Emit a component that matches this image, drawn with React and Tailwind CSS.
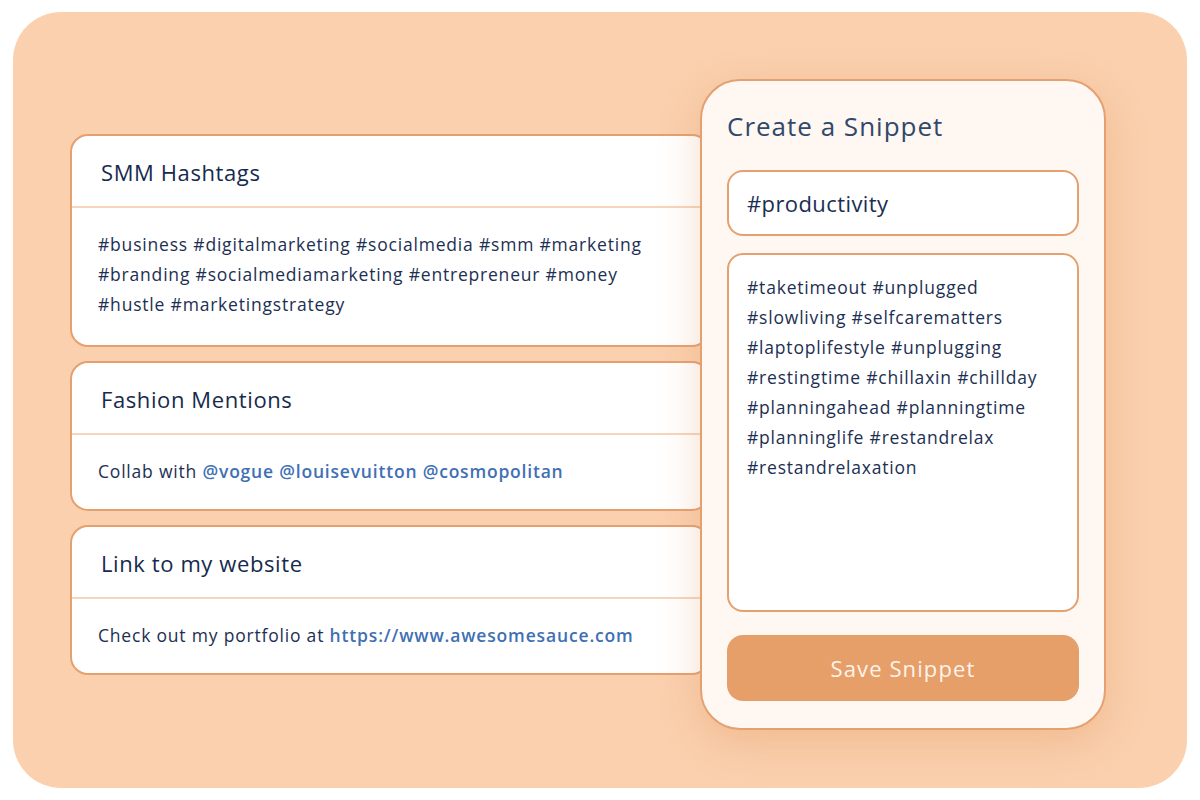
import React from "react";

function Card({ title, className, children }) {
  return (
    <div className={"flex flex-col rounded-[18px] border-2 border-[#e5a070] bg-white overflow-hidden " + className}>
      <div className="h-[72px] shrink-0 flex items-center pl-[29px] pt-[3px] border-b-2 border-[#f6d5bc] text-[22px] text-[#162a4d] tracking-[0.6px]">
        {title}
      </div>
      <div className="pl-[26px] pt-[21px] text-[17.5px] leading-[30px] tracking-[0.8px] text-[#1d2f52] whitespace-nowrap">
        {children}
      </div>
    </div>
  );
}

export default function App() {
  return (
    <div className="w-[1200px] h-[800px] bg-white pt-[12px] pl-[13px] font-['Open_Sans',sans-serif]">
      <div className="w-[1174px] h-[776px] rounded-[48px] bg-[#fad0ae] flex items-start pl-[57px] pt-[67px]">
        <div className="w-[640px] mt-[55px] flex flex-col gap-[14px]">
          <Card title="SMM Hashtags" className="h-[213px]">
            <div>#business #digitalmarketing #socialmedia #smm #marketing</div>
            <div>#branding #socialmediamarketing #entrepreneur #money</div>
            <div>#hustle #marketingstrategy</div>
          </Card>
          <Card title="Fashion Mentions" className="h-[150px]">
            Collab with{" "}
            <span className="font-semibold text-[#3f70b4] tracking-[0.8px]">@vogue @louisevuitton @cosmopolitan</span>
          </Card>
          <Card title="Link to my website" className="h-[150px]">
            Check out my portfolio at{" "}
            <span className="font-semibold text-[#3f70b4] tracking-[0.85px]">https://www.awesomesauce.com</span>
          </Card>
        </div>
        <div className="relative z-10 ml-[-10px] w-[406px] h-[651px] rounded-[40px] border-2 border-[#e5a070] bg-[#fef7f2] px-[25px] pt-[27px] flex flex-col shadow-[0_12px_40px_rgba(214,130,70,0.28)]">
          <div className="text-[26px] leading-[36px] text-[#30486a] tracking-[1px]">Create a Snippet</div>
          <div className="mt-[26px] h-[66px] shrink-0 rounded-[16px] border-2 border-[#e5a070] bg-white flex items-center pl-[18px] text-[22px] text-[#1b2e52] tracking-[0.4px]">
            #productivity
          </div>
          <div className="mt-[17px] h-[359px] shrink-0 rounded-[16px] border-2 border-[#e5a070] bg-white pl-[18px] pt-[17px] text-[17.5px] leading-[30px] tracking-[0.8px] text-[#1d2f52] whitespace-nowrap">
            <div>#taketimeout #unplugged</div>
            <div>#slowliving #selfcarematters</div>
            <div>#laptoplifestyle #unplugging</div>
            <div>#restingtime #chillaxin #chillday</div>
            <div>#planningahead #planningtime</div>
            <div>#planninglife #restandrelax</div>
            <div>#restandrelaxation</div>
          </div>
          <button className="mt-[23px] h-[66px] shrink-0 rounded-[16px] bg-[#e69f69] text-[22px] text-[#fdf3ea] tracking-[1.1px] flex items-center justify-center">
            Save Snippet
          </button>
        </div>
      </div>
    </div>
  );
}
